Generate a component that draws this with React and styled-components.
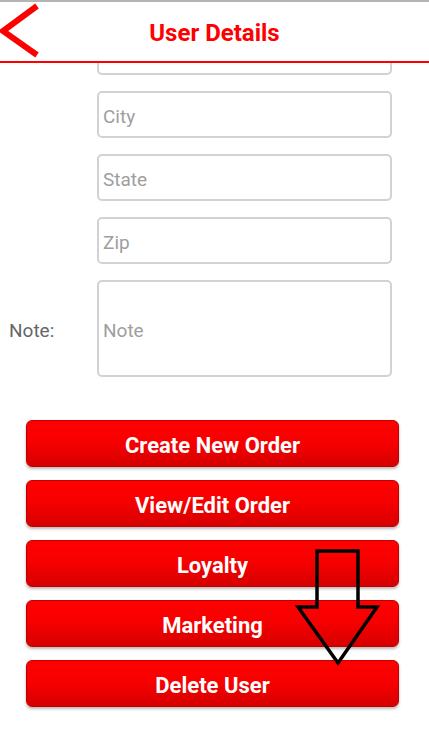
import React from 'react'
import styled, { createGlobalStyle } from 'styled-components'

const GlobalStyle = createGlobalStyle`
  html, body {
    margin: 0;
    padding: 0;
    background: #ffffff;
    font-family: Roboto, "Liberation Sans", sans-serif;
  }
  * { box-sizing: border-box; }
`

const Screen = styled.div`
  width: 429px;
  height: 739px;
  overflow: hidden;
  display: flex;
  flex-direction: column;
  background: #fff;
`

const Header = styled.header`
  flex: none;
  height: 63px;
  border-top: 2px solid #b4b4b4;
  border-bottom: 2px solid #ff0000;
  display: grid;
  grid-template-columns: 44px 1fr 44px;
  align-items: center;
  background: #fff;
  position: relative;
  z-index: 2;
`

const BackButton = styled.div`
  width: 44px;
  height: 59px;
  display: flex;
  cursor: pointer;
`

const Title = styled.h1`
  margin: 0;
  text-align: center;
  color: #ff0000;
  font-size: 24px;
  font-weight: 700;
  padding-top: 2px;
`

const Content = styled.div`
  flex: 1;
  overflow: hidden;
  position: relative;
  z-index: 1;
`

const Form = styled.div`
  display: flex;
  flex-direction: column;
  gap: 16px;
  margin-top: -35px;
  padding-left: 9px;
`

const Row = styled.div`
  display: grid;
  grid-template-columns: 88px 295px;
  align-items: center;
`

const Label = styled.span`
  color: #666;
  font-size: 19px;
  padding-top: 4px;
`

const Field = styled.div`
  height: ${p => p.$tall ? '97px' : '47px'};
  border: 2px solid #d2d2d2;
  border-radius: 5px;
  display: flex;
  align-items: center;
  padding: 3px 0 0 4px;
  color: #9e9e9e;
  font-size: 19px;
`

const Actions = styled.div`
  position: relative;
  margin: 43px 0 0 26px;
  width: 373px;
  display: flex;
  flex-direction: column;
  gap: 13px;
`

const ActionButton = styled.button`
  height: 47px;
  width: 100%;
  border: 1px solid #c00000;
  border-radius: 6px;
  background: linear-gradient(to bottom, #ff0000 0%, #f80000 45%, #d60000 100%);
  box-shadow: 0 2px 3px rgba(0, 0, 0, 0.28);
  color: #fff;
  font-family: Roboto, "Liberation Sans", sans-serif;
  font-size: 22px;
  font-weight: 700;
  padding: 3px 0 0;
  cursor: pointer;
`

const Pointer = styled.svg`
  position: absolute;
  left: 269px;
  top: 128px;
  pointer-events: none;
`

const fields = ['', 'City', 'State', 'Zip']
const actions = ['Create New Order', 'View/Edit Order', 'Loyalty', 'Marketing', 'Delete User']

export default function App() {
  return (
    <Screen>
      <GlobalStyle />
      <Header>
        <BackButton>
          <svg width="44" height="59" viewBox="0 0 44 59">
            <polyline points="37,4 3,29 37,53" fill="none" stroke="#ff0000" strokeWidth="6" />
          </svg>
        </BackButton>
        <Title>User Details</Title>
        <span />
      </Header>
      <Content>
        <Form>
          {fields.map((f, i) => (
            <Row key={i}>
              <Label />
              <Field>{f}</Field>
            </Row>
          ))}
          <Row>
            <Label>Note:</Label>
            <Field $tall>Note</Field>
          </Row>
        </Form>
        <Actions>
          {actions.map(a => <ActionButton key={a}>{a}</ActionButton>)}
          <Pointer width="86" height="120" viewBox="0 0 86 120">
            <polygon points="22,3 63,3 63,59 82,59 43,115 3,59 22,59" fill="none" stroke="#000" strokeWidth="3.5" />
          </Pointer>
        </Actions>
      </Content>
    </Screen>
  )
}
